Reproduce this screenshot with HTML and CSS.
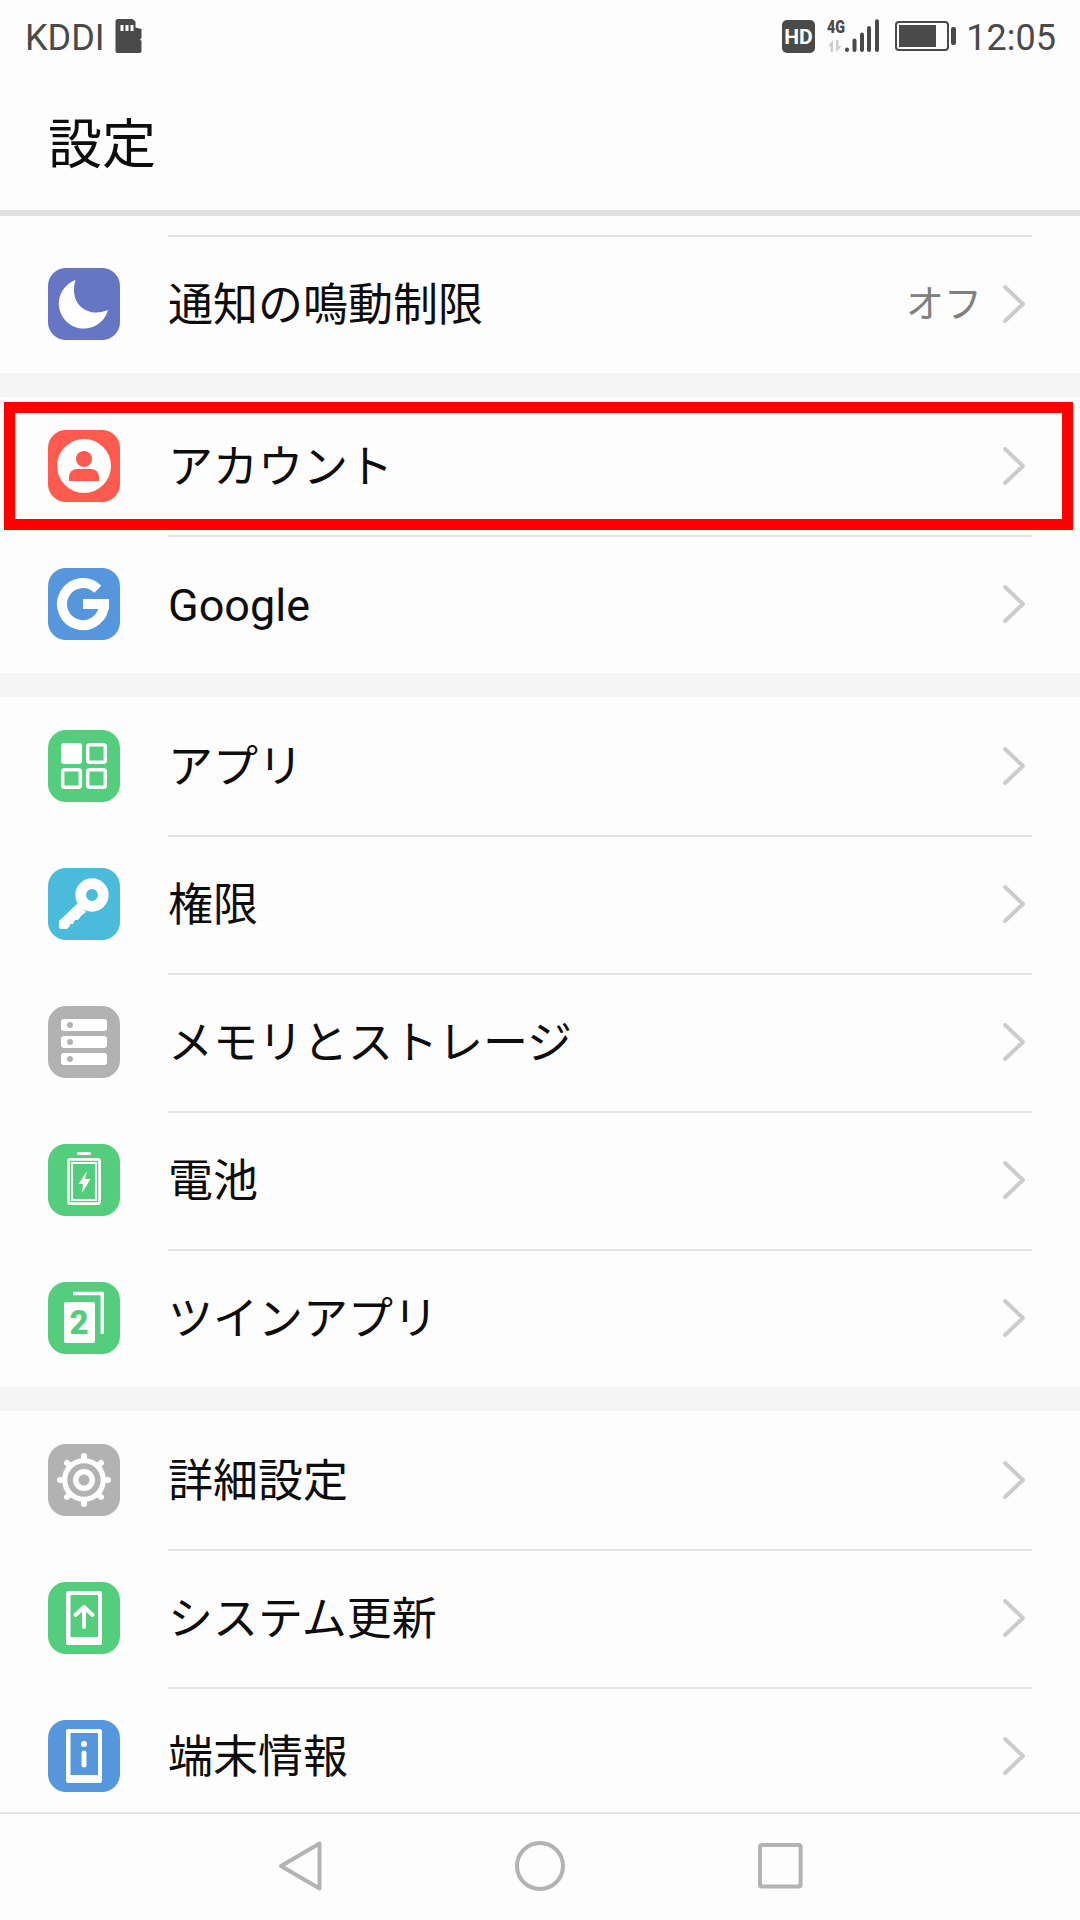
FILE: index.html
```html
<!DOCTYPE html>
<html lang="ja">
<head>
<meta charset="utf-8">
<title>設定</title>
<link rel="stylesheet" href="styles.css">
</head>
<body>
<div class="app">
  <div class="status">
    <div class="status-left">
      <span class="status-text">KDDI</span>
      <svg class="sd" width="27" height="34" viewBox="0 0 26 34"><path d="M2.500 0H17L20 2.500V8.500L26 10V19L24.500 20.500L26 22V32A2 2 0 0 1 24 34H2A2 2 0 0 1 0 32V2.500A2.500 2.500 0 0 1 2.500 0Z" fill="#4a4a4a"/><rect x="5" y="6" width="3" height="6" fill="#fff"/><rect x="10" y="6" width="3" height="6" fill="#fff"/><rect x="15" y="6" width="3" height="6" fill="#fff"/></svg>
    </div>
    <div class="status-right">
      <svg class="hd" width="33" height="33" viewBox="0 0 33 33"><rect width="33" height="33" rx="5" fill="#4a4a4a"/><text x="16.500" y="24" text-anchor="middle" class="hd-text">HD</text></svg>
      <svg class="sig" width="52" height="40" viewBox="0 -3 52 40"><text x="0" y="14" textLength="18" lengthAdjust="spacingAndGlyphs" class="g4">4G</text><path d="M1 27L6 21V33H3.500V27ZM9 21H11.500V27H15L9 33Z" fill="#cfcfcf"/><g stroke="#4a4a4a" stroke-width="4" stroke-linecap="round"><path d="M20 30.500V31"/><path d="M27.500 21.500V31"/><path d="M35 15.500V31"/><path d="M42 9V31"/><path d="M50 2.300V31"/></g></svg>
      <svg class="bat" width="62" height="30" viewBox="0 0 62 30"><rect x="1" y="1" width="52" height="28" rx="3" fill="none" stroke="#4a4a4a" stroke-width="2"/><rect x="4" y="4" width="37" height="22" fill="#4a4a4a"/><rect x="56" y="6" width="5" height="18" rx="2" fill="#4a4a4a"/></svg>
      <span class="status-text">12:05</span>
    </div>
  </div>

  <div class="header"><span class="title">設定</span></div>

  <div class="list">
    <section class="section first">
      <div class="row">
        <svg class="icon" viewBox="0 0 72 72"><rect width="72" height="72" rx="18" fill="#6675c4"/><path d="M27.500 12A25 25 0 1 0 60 42C42 50 20 38 27.500 12Z" fill="#fff"/></svg>
        <div class="body"><span class="label">通知の鳴動制限</span><span class="value">オフ</span><svg class="chev" width="24" height="40" viewBox="0 0 24 40"><path d="M3 3L21 20L3 37" fill="none" stroke="#cccccc" stroke-width="4" stroke-linecap="round" stroke-linejoin="round"/></svg></div>
      </div>
    </section>

    <section class="section">
      <div class="row no-line">
        <svg class="icon" viewBox="0 0 72 72"><rect width="72" height="72" rx="18" fill="#fe5b4e"/><circle cx="36" cy="36" r="27" fill="#fff"/><circle cx="36" cy="29" r="8" fill="#fe5b4e"/><path d="M21 51V47A8 8 0 0 1 29 39H43A8 8 0 0 1 51 47V51Z" fill="#fe5b4e"/></svg>
        <div class="body"><span class="label">アカウント</span><svg class="chev" width="24" height="40" viewBox="0 0 24 40"><path d="M3 3L21 20L3 37" fill="none" stroke="#cccccc" stroke-width="4" stroke-linecap="round" stroke-linejoin="round"/></svg></div>
      </div>
      <div class="row">
        <svg class="icon" viewBox="0 0 72 72"><rect width="72" height="72" rx="18" fill="#5596dc"/><path d="M49.800 21.200A21 21 0 1 0 56 36" fill="none" stroke="#fff" stroke-width="10"/><rect x="35" y="31" width="26" height="10" fill="#fff"/></svg>
        <div class="body"><span class="label">Google</span><svg class="chev" width="24" height="40" viewBox="0 0 24 40"><path d="M3 3L21 20L3 37" fill="none" stroke="#cccccc" stroke-width="4" stroke-linecap="round" stroke-linejoin="round"/></svg></div>
      </div>
    </section>

    <section class="section">
      <div class="row no-line">
        <svg class="icon" viewBox="0 0 72 72"><rect width="72" height="72" rx="18" fill="#54cd7c"/><rect x="13" y="13" width="21" height="21" rx="3" fill="#fff"/><g fill="none" stroke="#fff" stroke-width="3.500"><rect x="39.700" y="14.700" width="17.600" height="17.600" rx="2"/><rect x="14.700" y="39.700" width="17.600" height="17.600" rx="2"/><rect x="39.700" y="39.700" width="17.600" height="17.600" rx="2"/></g></svg>
        <div class="body"><span class="label">アプリ</span><svg class="chev" width="24" height="40" viewBox="0 0 24 40"><path d="M3 3L21 20L3 37" fill="none" stroke="#cccccc" stroke-width="4" stroke-linecap="round" stroke-linejoin="round"/></svg></div>
      </div>
      <div class="row">
        <svg class="icon" viewBox="0 0 72 72"><rect width="72" height="72" rx="18" fill="#4bbbdb"/><path d="M30 35L11 53V60L13 61H19L22 58V56L25 56L27 52L30 52L33 48L38 44Z" fill="#fff"/><circle cx="44" cy="27" r="11.300" fill="none" stroke="#fff" stroke-width="10.700"/></svg>
        <div class="body"><span class="label">権限</span><svg class="chev" width="24" height="40" viewBox="0 0 24 40"><path d="M3 3L21 20L3 37" fill="none" stroke="#cccccc" stroke-width="4" stroke-linecap="round" stroke-linejoin="round"/></svg></div>
      </div>
      <div class="row">
        <svg class="icon" viewBox="0 0 72 72"><rect width="72" height="72" rx="18" fill="#b2b2b2"/><g fill="#fff"><rect x="13" y="13" width="46" height="12" rx="3"/><rect x="13" y="30" width="46" height="12" rx="3"/><rect x="13" y="47" width="46" height="12" rx="3"/></g><g fill="#b2b2b2"><circle cx="22" cy="19" r="3"/><circle cx="22" cy="36" r="3"/><circle cx="22" cy="53" r="3"/></g></svg>
        <div class="body"><span class="label">メモリとストレージ</span><svg class="chev" width="24" height="40" viewBox="0 0 24 40"><path d="M3 3L21 20L3 37" fill="none" stroke="#cccccc" stroke-width="4" stroke-linecap="round" stroke-linejoin="round"/></svg></div>
      </div>
      <div class="row">
        <svg class="icon" viewBox="0 0 72 72"><rect width="72" height="72" rx="18" fill="#54cd7c"/><rect x="29" y="8" width="14" height="3" rx="1.500" fill="#fff"/><rect x="20.400" y="15.400" width="31.200" height="44.200" rx="2" fill="none" stroke="#fff" stroke-width="2.800"/><rect x="24" y="19" width="24" height="37" fill="none" stroke="#fff" stroke-width="2"/><path d="M39 27L30.500 40H35L34 49L42.500 35H37Z" fill="#fff"/></svg>
        <div class="body"><span class="label">電池</span><svg class="chev" width="24" height="40" viewBox="0 0 24 40"><path d="M3 3L21 20L3 37" fill="none" stroke="#cccccc" stroke-width="4" stroke-linecap="round" stroke-linejoin="round"/></svg></div>
      </div>
      <div class="row">
        <svg class="icon" viewBox="0 0 72 72"><rect width="72" height="72" rx="18" fill="#54cd7c"/><path d="M25 11.500H54.300V52" fill="none" stroke="#fff" stroke-width="3.400"/><rect x="16" y="20" width="31" height="41" rx="2" fill="#fff"/><text x="31" y="52" text-anchor="middle" class="two">2</text></svg>
        <div class="body"><span class="label">ツインアプリ</span><svg class="chev" width="24" height="40" viewBox="0 0 24 40"><path d="M3 3L21 20L3 37" fill="none" stroke="#cccccc" stroke-width="4" stroke-linecap="round" stroke-linejoin="round"/></svg></div>
      </div>
    </section>

    <section class="section">
      <div class="row no-line">
        <svg class="icon" viewBox="0 0 72 72"><rect width="72" height="72" rx="18" fill="#b2b2b2"/><circle cx="36" cy="36" r="22" fill="#fff"/><g stroke="#fff" stroke-width="6" stroke-linecap="round"><path d="M36 12V14"/><path d="M36 58V60"/><path d="M12 36H14"/><path d="M58 36H60"/><path d="M19 19L20.500 20.500"/><path d="M53 19L51.500 20.500"/><path d="M19 53L20.500 51.500"/><path d="M53 53L51.500 51.500"/></g><circle cx="36" cy="36" r="16.700" fill="#b2b2b2"/><circle cx="36" cy="36" r="11" fill="#fff"/><circle cx="36" cy="36" r="5.500" fill="#b2b2b2"/></svg>
        <div class="body"><span class="label">詳細設定</span><svg class="chev" width="24" height="40" viewBox="0 0 24 40"><path d="M3 3L21 20L3 37" fill="none" stroke="#cccccc" stroke-width="4" stroke-linecap="round" stroke-linejoin="round"/></svg></div>
      </div>
      <div class="row">
        <svg class="icon" viewBox="0 0 72 72"><rect width="72" height="72" rx="18" fill="#54cd7c"/><path fill-rule="evenodd" d="M20 9H52A2 2 0 0 1 54 11V61A2 2 0 0 1 52 63H20A2 2 0 0 1 18 61V11A2 2 0 0 1 20 9ZM22.500 13V55H50V13Z" fill="#fff"/><path d="M36 26V45M27.500 33L36 25L44.500 33" fill="none" stroke="#fff" stroke-width="4" stroke-linecap="round" stroke-linejoin="round"/></svg>
        <div class="body"><span class="label">システム更新</span><svg class="chev" width="24" height="40" viewBox="0 0 24 40"><path d="M3 3L21 20L3 37" fill="none" stroke="#cccccc" stroke-width="4" stroke-linecap="round" stroke-linejoin="round"/></svg></div>
      </div>
      <div class="row">
        <svg class="icon" viewBox="0 0 72 72"><rect width="72" height="72" rx="18" fill="#5596dc"/><path fill-rule="evenodd" d="M20 9H52A2 2 0 0 1 54 11V61A2 2 0 0 1 52 63H20A2 2 0 0 1 18 61V11A2 2 0 0 1 20 9ZM22.500 13V55H50V13Z" fill="#fff"/><circle cx="36" cy="24" r="3" fill="#fff"/><path d="M36 33V45" stroke="#fff" stroke-width="5" stroke-linecap="round"/></svg>
        <div class="body"><span class="label">端末情報</span><svg class="chev" width="24" height="40" viewBox="0 0 24 40"><path d="M3 3L21 20L3 37" fill="none" stroke="#cccccc" stroke-width="4" stroke-linecap="round" stroke-linejoin="round"/></svg></div>
      </div>
    </section>
  </div>

  <div class="nav">
    <svg width="46" height="54" viewBox="0 0 46 54"><path d="M42.500 3.500V48.500L4 26Z" fill="none" stroke="#b3b3b3" stroke-width="4" stroke-linejoin="round"/></svg>
    <svg width="54" height="54" viewBox="0 0 54 54"><circle cx="27" cy="26" r="23" fill="none" stroke="#b3b3b3" stroke-width="4"/></svg>
    <svg width="48" height="54" viewBox="0 0 48 54"><rect x="4" y="5" width="40.600" height="41.500" rx="2" fill="none" stroke="#b3b3b3" stroke-width="4"/></svg>
  </div>

  <div class="highlight"></div>
</div>
</body>
</html>
```

FILE: styles.css
```css
* { box-sizing: border-box; }
html, body { margin: 0; padding: 0; }
body { background: #fdfdfd; font-family: Roboto, "Noto Sans CJK JP", sans-serif; }

.app {
  position: relative;
  width: 1080px;
  height: 1920px;
  display: flex;
  flex-direction: column;
  background: #fdfdfd;
  overflow: hidden;
}

.status {
  height: 72px;
  flex: none;
  display: flex;
  align-items: center;
  justify-content: space-between;
  padding: 0 24px 0 25px;
}
.status-left, .status-right { display: flex; align-items: center; }
.status-text { font-size: 36px; color: #4a4a4a; line-height: 72px; padding-top: 3px; }
.sd { margin-left: 10px; }
.hd { margin-right: 12px; }
.sig { margin-right: 16px; }
.bat { margin-right: 9px; }
.hd-text { font: 700 21px Roboto, sans-serif; fill: #fff; }
.g4 { font: 900 18px Roboto, sans-serif; fill: #4a4a4a; }
.two { font: 900 33px Roboto, sans-serif; fill: #54cd7c; }

.header {
  height: 144px;
  flex: none;
  display: flex;
  align-items: center;
  padding: 10px 0 0 48px;
  border-bottom: 6px solid #e0e0e0;
}
.title { font-size: 54px; color: #0d0d0d; line-height: 1; }

.list {
  flex: 1;
  min-height: 0;
  overflow: hidden;
  background: #f5f5f5;
  display: flex;
  flex-direction: column;
  gap: 24px;
}
.section { background: #fdfdfd; flex: none; }
.section.first { padding-top: 19px; }
.row {
  height: 138px;
  display: flex;
  align-items: stretch;
  padding: 0 48px 0 48px;
}
.icon { width: 72px; height: 72px; flex: none; align-self: center; }
.body {
  flex: 1;
  margin-left: 48px;
  display: flex;
  align-items: center;
  border-top: 2px solid #e4e4e4;
  padding: 0 6px 0 0;
}
.no-line .body { border-top-color: transparent; }
.label { flex: 1; font-size: 45px; color: #0d0d0d; line-height: 1; }
.value { font-size: 38px; color: #808080; margin: 0 20px 2px 0; line-height: 1; }
.chev { margin-bottom: 3px; }

.nav {
  height: 108px;
  flex: none;
  border-top: 2px solid #e4e4e4;
  background: #fdfdfd;
  display: grid;
  grid-template-columns: repeat(3, 240px);
  justify-content: center;
  justify-items: center;
  align-items: center;
}

.highlight {
  position: absolute;
  left: 4px;
  top: 402px;
  width: 1069px;
  height: 128px;
  border: 11px solid #ff0000;
}
```
